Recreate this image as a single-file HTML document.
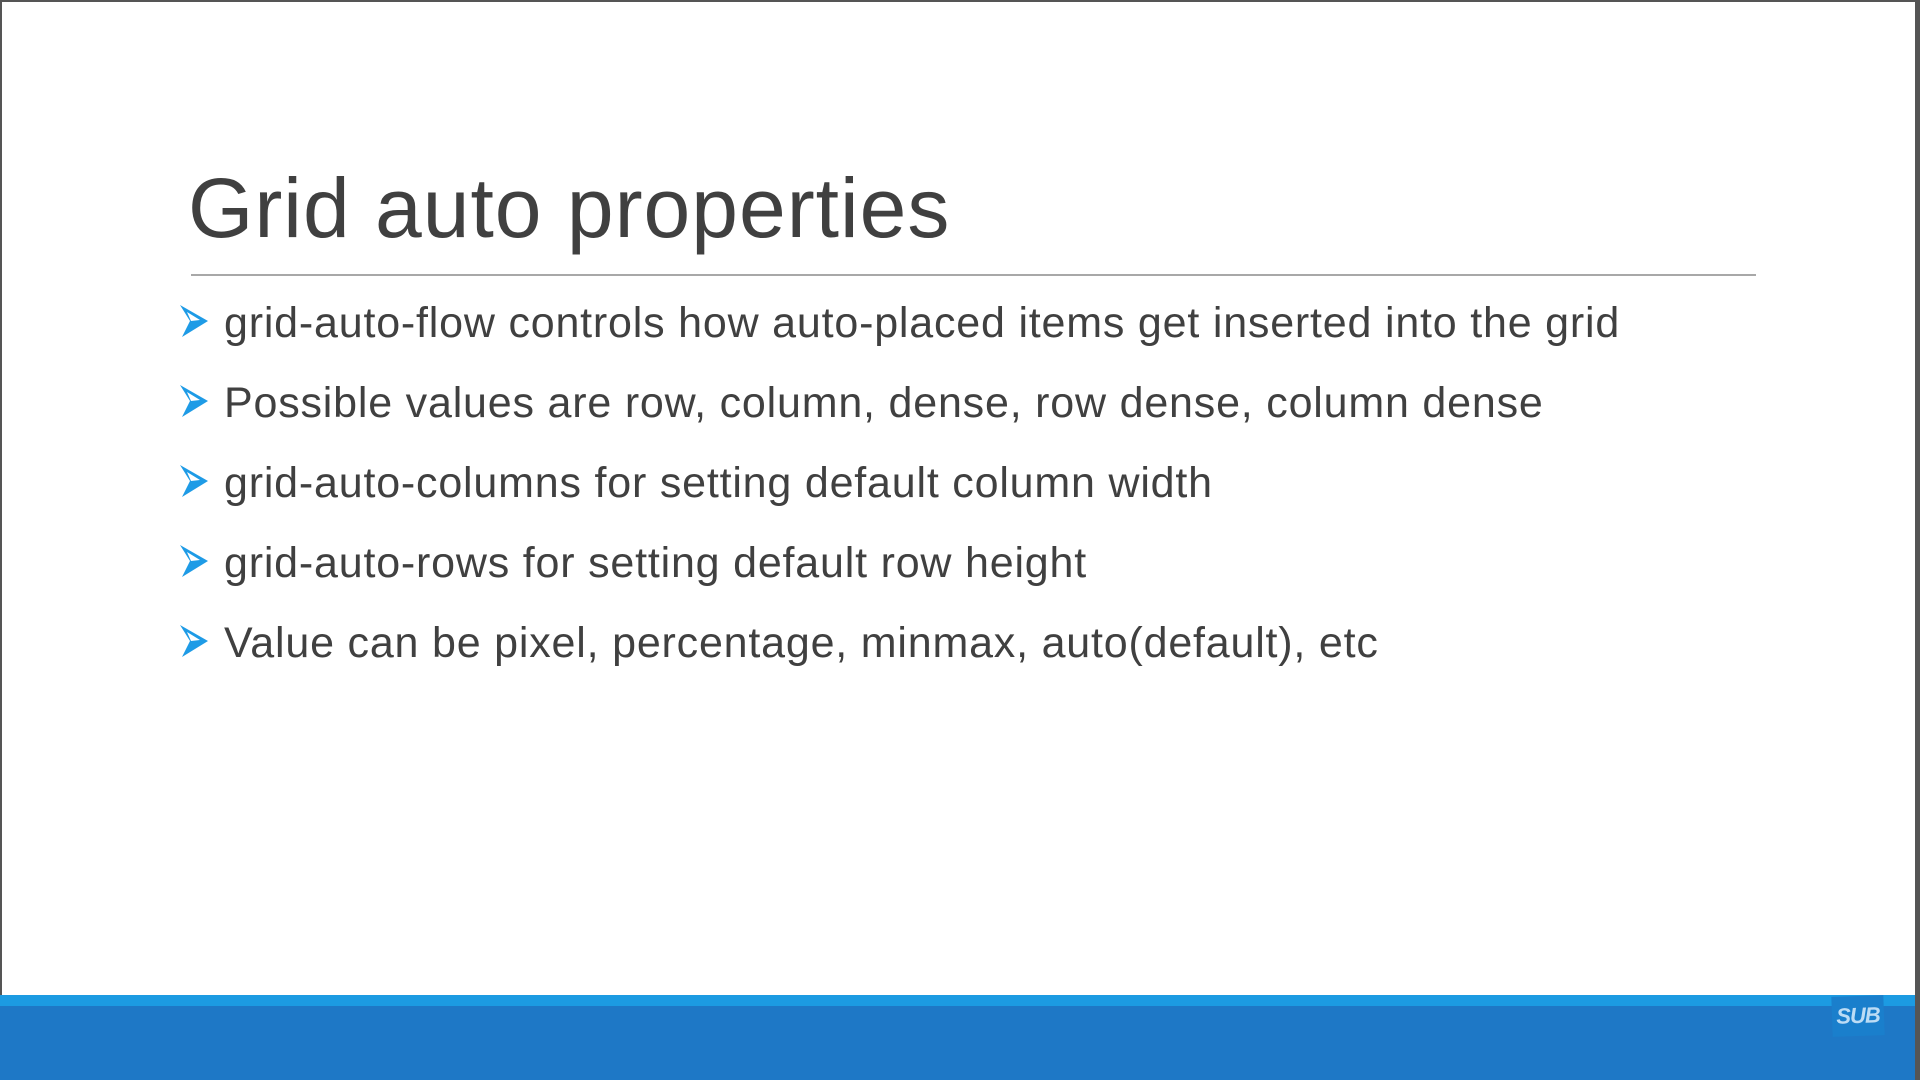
<!DOCTYPE html>
<html><head><meta charset="utf-8"><style>
html,body{margin:0;padding:0}
body{width:1920px;height:1080px;position:relative;overflow:hidden;background:#fff;font-family:"Liberation Sans",sans-serif}
.bt{position:absolute;left:0;top:0;width:1920px;height:2px;background:#555}
.bl{position:absolute;left:0;top:0;width:2px;height:1080px;background:#555}
.br{position:absolute;right:0;top:0;width:5px;height:1080px;background:#555}
h1{position:absolute;left:188px;top:158px;margin:0;font-weight:normal;font-size:84px;letter-spacing:1px;color:#404040;line-height:100px;white-space:nowrap}
.hr{position:absolute;left:191px;top:274px;width:1565px;height:2px;background:#a8a8a8}
.li{position:absolute;left:224px;font-size:43px;color:#404040;letter-spacing:0.8px;white-space:nowrap;line-height:50px}
.ar{position:absolute;left:178px;width:32px;height:36px}
.bar1{position:absolute;left:0;top:995px;width:1920px;height:11px;background:#1c9be2}
.bar2{position:absolute;left:0;top:1006px;width:1920px;height:74px;background:#1e78c6}
.sub{position:absolute;left:1832px;top:996px;width:52px;height:40px;background:#1a7fcc;transform:rotate(-2deg);color:#bcdcf5;font-weight:bold;font-style:italic;font-size:22px;text-align:center;line-height:40px;letter-spacing:-1px}
</style></head><body>
<div class="bt"></div><div class="bl"></div>
<h1>Grid auto properties</h1>
<div class="hr"></div>
<svg class="ar" style="top:303px" viewBox="0 0 32 36"><path d="M2 2 L30 18 L4 34 L12 18 Z" fill="#1e9be6"/><path d="M9 9 L22 17 L13 18 Z" fill="#fff"/></svg>
<div class="li" style="top:298px">grid-auto-flow controls how auto-placed items get inserted into the grid</div>
<svg class="ar" style="top:383px" viewBox="0 0 32 36"><path d="M2 2 L30 18 L4 34 L12 18 Z" fill="#1e9be6"/><path d="M9 9 L22 17 L13 18 Z" fill="#fff"/></svg>
<div class="li" style="top:378px">Possible values are row, column, dense, row dense, column dense</div>
<svg class="ar" style="top:463px" viewBox="0 0 32 36"><path d="M2 2 L30 18 L4 34 L12 18 Z" fill="#1e9be6"/><path d="M9 9 L22 17 L13 18 Z" fill="#fff"/></svg>
<div class="li" style="top:458px">grid-auto-columns for setting default column width</div>
<svg class="ar" style="top:543px" viewBox="0 0 32 36"><path d="M2 2 L30 18 L4 34 L12 18 Z" fill="#1e9be6"/><path d="M9 9 L22 17 L13 18 Z" fill="#fff"/></svg>
<div class="li" style="top:538px">grid-auto-rows for setting default row height</div>
<svg class="ar" style="top:623px" viewBox="0 0 32 36"><path d="M2 2 L30 18 L4 34 L12 18 Z" fill="#1e9be6"/><path d="M9 9 L22 17 L13 18 Z" fill="#fff"/></svg>
<div class="li" style="top:618px">Value can be pixel, percentage, minmax, auto(default), etc</div>
<div class="bar1"></div><div class="bar2"></div>
<div class="sub">SUB</div>
<div class="br"></div>
</body></html>
